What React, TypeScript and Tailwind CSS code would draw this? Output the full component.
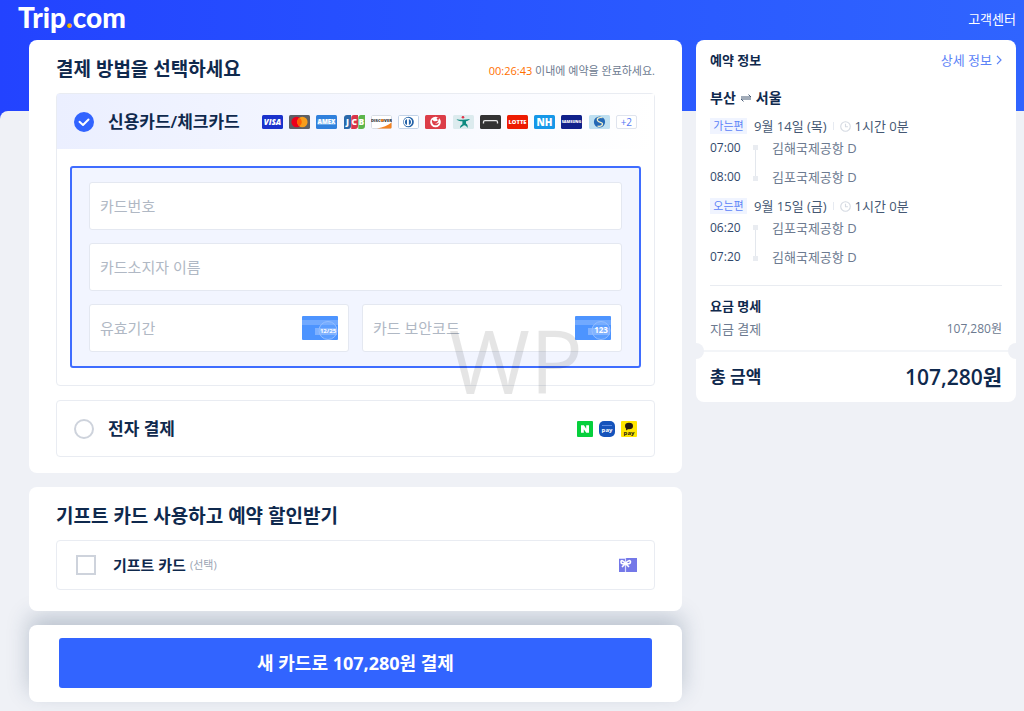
import { ReactNode } from "react";

/* ── Data ─────────────────────────────────────────────────── */
const legs = [
  {
    tag: "가는편",
    date: "9월 14일 (목)",
    duration: "1시간 0분",
    stops: [
      { time: "07:00", airport: "김해국제공항 D" },
      { time: "08:00", airport: "김포국제공항 D" },
    ],
  },
  {
    tag: "오는편",
    date: "9월 15일 (금)",
    duration: "1시간 0분",
    stops: [
      { time: "06:20", airport: "김포국제공항 D" },
      { time: "07:20", airport: "김해국제공항 D" },
    ],
  },
];

/* ── Brand icons ──────────────────────────────────────────── */
function Brand({ label, bg, children }: { label: string; bg: string; children: ReactNode }) {
  return (
    <svg viewBox="0 0 21 14" className="h-3.5 w-[21px] shrink-0" role="img" aria-label={label}>
      <rect width="21" height="14" rx="1.5" fill={bg} />
      {children}
    </svg>
  );
}

function BrandText({ size, y, fill = "#fff", italic, children }: { size: number; y: number; fill?: string; italic?: boolean; children: string }) {
  return (
    <text
      x="10.5"
      y={y}
      fontSize={size}
      fontWeight="800"
      fontStyle={italic ? "italic" : "normal"}
      fill={fill}
      textAnchor="middle"
      fontFamily="Open Sans, sans-serif"
    >
      {children}
    </text>
  );
}

function CardBrands() {
  return (
    <div className="ml-auto flex w-[375px] items-center justify-between">
      <Brand label="Visa" bg="#1a32cc">
        <BrandText size={8} y={10} italic>VISA</BrandText>
      </Brand>
      <Brand label="Mastercard" bg="#5c5f66">
        <circle cx="7.6" cy="7" r="5.2" fill="#eb001b" />
        <circle cx="13.4" cy="7" r="5.2" fill="#f79e1b" />
        <path d="M10.5 2.7a5.2 5.2 0 0 1 0 8.6 5.2 5.2 0 0 1 0-8.6z" fill="#ff5f00" />
      </Brand>
      <Brand label="American Express" bg="#2f80dc">
        <rect x="1.5" y="4" width="18" height="6" fill="#68a8ea" />
        <BrandText size={6} y={9.2}>AMEX</BrandText>
      </Brand>
      <Brand label="JCB" bg="#fff">
        <path d="M3 0h4v11a3 3 0 0 1-3 3H0V3a3 3 0 0 1 3-3z" fill="#2a69ab" />
        <path d="M10 0h4v11a3 3 0 0 1-3 3H7.200V3A3 3 0 0 1 10 0z" fill="#d8354a" />
        <path d="M17 0h4v11a3 3 0 0 1-3 3h-3.700V3A3 3 0 0 1 17 0z" fill="#5cb54c" />
        <text y="10" fontSize="8.5" fontWeight="800" fill="#fff" fontFamily="Open Sans, sans-serif">
          <tspan x="2">J</tspan>
          <tspan x="7.500">C</tspan>
          <tspan x="14.500">B</tspan>
        </text>
      </Brand>
      <Brand label="Discover" bg="#fff">
        <rect x=".5" y=".5" width="20" height="13" rx="1.2" fill="#fff" stroke="#d8dde6" />
        <path d="M20.5 7.5v5a1 1 0 0 1-1 1H6c6-1 11-3 14.500-6z" fill="#f58220" />
        <BrandText size={4.2} y={6.8} fill="#33363b">DISCOVER</BrandText>
        <circle cx="11.200" cy="5.300" r="1.400" fill="#f58220" />
      </Brand>
      <Brand label="Diners Club" bg="#fff">
        <rect x=".5" y=".5" width="20" height="13" rx="1.2" fill="#fff" stroke="#c3d3e8" />
        <circle cx="10.500" cy="7" r="5.300" fill="#2362a8" />
        <circle cx="9.900" cy="7" r="4.200" fill="#fff" />
        <path d="M9 3.900a3.300 3.300 0 0 0 0 6.200zM10.900 3.900a3.300 3.300 0 0 1 0 6.200z" fill="#2362a8" />
      </Brand>
      <Brand label="BC" bg="#dc3d48">
        <circle cx="10.500" cy="7" r="5.300" fill="#fff" />
        <path d="M7 4.500c1.500 2 4 2.500 6.500.5-.3 2-1.500 3-3.500 3.300 1.500.6 3 .2 4.200-.9-.8 2.200-2.600 3.400-4.800 2.800C7.500 9.600 6.500 7 7 4.500z" fill="#dc3d48" />
        <circle cx="13" cy="3.600" r="1.200" fill="#dc3d48" />
      </Brand>
      <Brand label="Hana" bg="#dcebee">
        <circle cx="10" cy="2.300" r="1.300" fill="#e0344a" />
        <path d="M3.500 4.200c4 .8 8.500.8 13.500-.2-1 1.200-2.500 1.900-4 2.200v2.300c1.500.9 2 2.500 1.500 4.500-.6-1.500-2-2.500-3.500-2.700L7 13c0-1.700.9-3 2.400-3.800V6.300c-2.500 0-4.700-.6-5.900-2.100z" fill="#0c8a80" />
      </Brand>
      <Brand label="Hyundai" bg="#333333">
        <path d="M3.500 8.500V7c0-1 .6-1.400 1.500-1.400h11c1 0 1.500.5 1.500 1.400v1.500" fill="none" stroke="#e8e8e8" strokeWidth="1.300" />
      </Brand>
      <Brand label="Lotte" bg="#ed1c02">
        <BrandText size={5.8} y={9}>LOTTE</BrandText>
      </Brand>
      <Brand label="NH" bg="#1697e8">
        <BrandText size={10} y={10.5}>NH</BrandText>
      </Brand>
      <Brand label="Samsung" bg="#10218b">
        <BrandText size={3.8} y={8.4}>SAMSUNG</BrandText>
      </Brand>
      <Brand label="Shinhan" bg="#bfe0f1">
        <circle cx="10.500" cy="7" r="5.600" fill="#2468b5" />
        <path d="M13.500 2.800C11 2 7.500 3 8.500 5.500s5.500 1.200 5 3.700-3 2.300-5 2" fill="none" stroke="#f2efc9" strokeWidth="1.200" />
      </Brand>
      <span className="flex h-3.5 w-[21px] shrink-0 items-center justify-center rounded-xs border border-[#dfe4ee] bg-white text-[10px] leading-3 text-[#5478f5]">
        +2
      </span>
    </div>
  );
}

function WalletBrands() {
  return (
    <div className="ml-auto flex items-center gap-1.5">
      <svg viewBox="0 0 16 16" className="size-4" role="img" aria-label="Naver Pay">
        <rect width="16" height="16" rx="1" fill="#06cf3c" />
        <path d="M4 4.200h2.900l2.300 3.500V4.200H12v7.600H9.200L6.800 8.300v3.500H4z" fill="#fff" />
      </svg>
      <svg viewBox="0 0 16 16" className="size-4" role="img" aria-label="Samsung Pay">
        <rect width="16" height="16" rx="5" fill="#1553bb" />
        <rect x="3" y="4" width="10" height="1" fill="#5c8ae0" />
        <text x="8" y="10.500" fontSize="6" fontWeight="700" fill="#fff" textAnchor="middle" fontFamily="Open Sans, sans-serif">pay</text>
      </svg>
      <svg viewBox="0 0 16 16" className="size-4" role="img" aria-label="Kakao Pay">
        <rect width="16" height="16" rx="1" fill="#ffe600" />
        <ellipse cx="8" cy="5" rx="4" ry="3.300" fill="#241a12" />
        <path d="M5.200 6.500 5 9.500l2.600-1.700z" fill="#241a12" />
        <text x="8" y="14" fontSize="6" fontWeight="700" fill="#241a12" textAnchor="middle" fontFamily="Open Sans, sans-serif">pay</text>
      </svg>
    </div>
  );
}

function CardHint({ text, size }: { text: string; size: number }) {
  return (
    <svg viewBox="0 0 36 24" className="h-6 w-9 shrink-0" aria-hidden="true">
      <rect width="36" height="24" rx="1" fill="#4d94ff" />
      <rect y="4" width="36" height="5" fill="#71a9ff" />
      <rect x="13" y="12" width="22" height="7" fill="#7fb1ff" />
      <circle cx="26" cy="14.500" r="9" fill="#8dbaff" fillOpacity=".25" stroke="#94beff" />
      <text x="26" y="17" fontSize={size} fontWeight="700" fill="#fff" textAnchor="middle" fontFamily="Open Sans, sans-serif">
        {text}
      </text>
    </svg>
  );
}

/* ── Form pieces ──────────────────────────────────────────── */
function Field({ label, hint }: { label: string; hint?: ReactNode }) {
  return (
    <label className="flex h-12 w-full min-w-0 items-center rounded-[3px] border border-[#e4e8f1] bg-white px-2.5">
      <input
        type="text"
        aria-label={label}
        placeholder={label}
        className="w-full min-w-0 flex-1 bg-transparent text-[15px] leading-5 outline-none placeholder:text-[#b0b8c4]"
      />
      {hint}
    </label>
  );
}

function PayRadio({ label, checked }: { label: string; checked?: boolean }) {
  return (
    <label className="flex items-center gap-3.5 text-[17px] leading-6 font-semibold">
      <span className="relative size-5">
        <input
          type="radio"
          name="method"
          defaultChecked={checked}
          className="peer block size-5 appearance-none rounded-full border-2 border-[#ced3dc] bg-white checked:border-[#3264ff] checked:bg-[#3264ff]"
        />
        <svg viewBox="0 0 20 20" className="pointer-events-none absolute inset-0 hidden peer-checked:block">
          <path d="M5.500 9.800 9 13l5.500-5.500" fill="none" stroke="#fff" strokeWidth="2" strokeLinecap="round" strokeLinejoin="round" />
        </svg>
      </span>
      {label}
    </label>
  );
}

function CardForm() {
  return (
    <div className="relative mx-[13px] my-[17px] flex flex-col gap-[13px] rounded-[3px] border-2 border-[#3f6dff] bg-[#f2f5ff] px-[17px] py-3.5">
      <Field label="카드번호" />
      <Field label="카드소지자 이름" />
      <div className="flex gap-[13px]">
        <Field label="유효기간" hint={<CardHint text="12/25" size={6} />} />
        <Field label="카드 보안코드" hint={<CardHint text="123" size={8} />} />
      </div>
      <span className="pointer-events-none absolute right-14 -bottom-11 text-[88px] leading-[100px] font-normal text-black/10">
        WP
      </span>
    </div>
  );
}

/* ── Booking summary ──────────────────────────────────────── */
function Leg({ leg }: { leg: (typeof legs)[number] }) {
  return (
    <div>
      <div className="flex h-5 items-center text-[13px] leading-5 text-[#455873]">
        <span className="w-[37px] bg-[#f0f4ff] text-center text-[11px] leading-4 text-[#5c83f7]">{leg.tag}</span>
        <span className="ml-[7px]">{leg.date}</span>
        <span className="mx-1.5 h-2 w-px bg-[#e6eaf1]" />
        <svg viewBox="0 0 12 12" className="mr-1 size-[11px]" aria-hidden="true">
          <circle cx="6" cy="6" r="5.200" fill="none" stroke="#d5dae2" strokeWidth="1.200" />
          <path d="M6 3v3.300h2.600" fill="none" stroke="#d5dae2" strokeWidth="1.200" />
        </svg>
        <span>{leg.duration}</span>
      </div>
      <div className="mt-0.5 flex">
        <ul className="flex w-[43px] flex-col gap-[9px] text-xs leading-5 text-[#31486b]">
          {leg.stops.map((s) => (
            <li key={s.time}>{s.time}</li>
          ))}
        </ul>
        <div className="mt-[7px] mb-1.5 flex w-[5px] flex-col items-center">
          <span className="size-[5px] bg-[#e9ecf1]" />
          <span className="w-px flex-1 bg-[#e3e7ed]" />
          <span className="size-[5px] bg-[#e9ecf1]" />
        </div>
        <ul className="ml-3.5 flex flex-col gap-[9px] text-[13px] leading-5 text-[#6c7a90]">
          {leg.stops.map((s) => (
            <li key={s.airport}>{s.airport}</li>
          ))}
        </ul>
      </div>
    </div>
  );
}

function Summary() {
  return (
    <aside className="w-80 shrink-0 rounded-lg bg-white">
      <div className="px-3.5 pt-2.5 pb-[11px]">
        <div className="flex items-center justify-between text-[13px] leading-5">
          <h2 className="font-semibold">예약 정보</h2>
          <a href="#detail" className="flex items-center gap-1 text-[#5c83f7]">
            상세 정보
            <svg viewBox="0 0 6 10" className="h-2.5 w-1.5" aria-hidden="true">
              <path d="m1 .800 4 4.200-4 4.200" fill="none" stroke="currentColor" strokeWidth="1.200" />
            </svg>
          </a>
        </div>
        <h3 className="mt-[18px] flex items-center gap-1 text-[14px] leading-5 font-semibold">
          부산
          <svg viewBox="0 0 12 8" className="h-2 w-3" aria-label="왕복">
            <path d="M1 3h10L8.500.600M11 5H1l2.500 2.400" fill="none" stroke="#455873" strokeWidth="1" />
          </svg>
          서울
        </h3>
        <div className="mt-2 flex flex-col gap-[9px]">
          {legs.map((leg) => (
            <Leg key={leg.tag} leg={leg} />
          ))}
        </div>
        <div className="mt-[18px] border-t border-[#e9ecf1] pt-2.5">
          <h3 className="text-[13px] leading-5 font-semibold">요금 명세</h3>
          <div className="mt-[3px] flex justify-between text-[13px] leading-5 text-[#6c7a90]">
            <span>지금 결제</span>
            <span className="text-xs leading-5">107,280원</span>
          </div>
        </div>
      </div>
      <div className="relative flex h-[52px] items-center justify-between border-t-2 border-[#f3f5f8] px-3.5 font-semibold">
        <span className="absolute top-[-9px] left-0 h-4 w-2 rounded-r-full bg-[#eff1f6]" />
        <span className="absolute top-[-9px] right-0 h-4 w-2 rounded-l-full bg-[#eff1f6]" />
        <span className="text-[17px] leading-6">총 금액</span>
        <span className="text-[21px] leading-6">107,280원</span>
      </div>
    </aside>
  );
}

/* ── Page ─────────────────────────────────────────────────── */
export default function App() {
  return (
    <div className="min-h-screen bg-[#eff1f6] font-['Open_Sans','Noto_Sans_CJK_KR',sans-serif] text-[#0f294d]">
      <header className="flex h-[127px] flex-col bg-linear-to-r from-[#2343ff] to-[#3064ff]">
        <div className="flex h-[37px] items-center justify-between pr-2 pl-[18px] text-white">
          <a href="#home" className="pb-1 font-[Lato,sans-serif] text-[28px] leading-8 font-black">
            Trip<span className="text-[#ffb400]">.</span>com
          </a>
          <a href="#help" className="text-[13px] leading-5">고객센터</a>
        </div>
        <div className="mt-auto h-4 rounded-tl-lg bg-[#eff1f6]" />
      </header>

      <div className="relative -mt-[87px] flex items-start gap-3.5 pr-2 pb-2 pl-[29px]">
        <main className="flex min-w-0 flex-1 flex-col gap-3.5">
          <section className="rounded-lg bg-white px-[27px] pt-[17px] pb-4">
            <div className="flex items-center justify-between">
              <h1 className="text-[19px] leading-6 font-semibold">결제 방법을 선택하세요</h1>
              <p className="pt-1 text-[11px] leading-5 text-[#6c7a90]">
                <span className="text-[#ff6f00]">00:26:43</span> 이내에 예약을 완료하세요.
              </p>
            </div>
            <div className="mt-3 rounded border border-[#e9ecf2]">
              <div className="flex h-[55px] items-center bg-linear-to-r from-[#ebefff] to-white px-[17px]">
                <PayRadio label="신용카드/체크카드" checked />
                <CardBrands />
              </div>
              <CardForm />
            </div>
            <div className="mt-3.5 flex h-[57px] items-center rounded border border-[#e9ecf2] px-[17px]">
              <PayRadio label="전자 결제" />
              <WalletBrands />
            </div>
          </section>

          <section className="relative z-10 rounded-lg bg-white px-[27px] pt-[17px] pb-[21px]">
            <h2 className="text-[19px] leading-6 font-semibold">기프트 카드 사용하고 예약 할인받기</h2>
            <div className="mt-3 flex h-[50px] items-center rounded border border-[#e9ecf2] px-[17px]">
              <label className="ml-0.5 flex items-center text-[15px] leading-5 font-semibold">
                <input type="checkbox" className="mr-[17px] size-5 appearance-none border-2 border-[#ced3dc] bg-white checked:bg-[#3264ff]" />
                기프트 카드
                <span className="ml-1 text-[11px] font-normal text-[#9aa4b3]">(선택)</span>
              </label>
              <svg viewBox="0 0 18 14" className="ml-auto h-3.5 w-[18px]" aria-hidden="true">
                <rect width="18" height="14" fill="#7478e8" />
                <path d="M6.500 0v14M0 .5h7" stroke="#d9dbff" strokeWidth="1.200" />
                <path d="M6.500 5.500C4 2 2 2 2 4s2 2 4.500 1.500C9 2 11.500 2 11.500 4s-2.500 2-5 1.500L3 9M6.500 5.500 10 9" fill="none" stroke="#fff" strokeWidth="1.600" />
              </svg>
            </div>
          </section>

          <section className="rounded-lg bg-white px-[30px] pt-[13px] pb-3.5 shadow-[0_-9px_22px_rgba(40,65,95,0.26)]">
            <button type="button" className="h-[50px] w-full rounded-[3px] bg-[#3264ff] text-[18px] leading-6 font-bold text-white">
              새 카드로 107,280원 결제
            </button>
          </section>
        </main>

        <Summary />
      </div>
    </div>
  );
}
